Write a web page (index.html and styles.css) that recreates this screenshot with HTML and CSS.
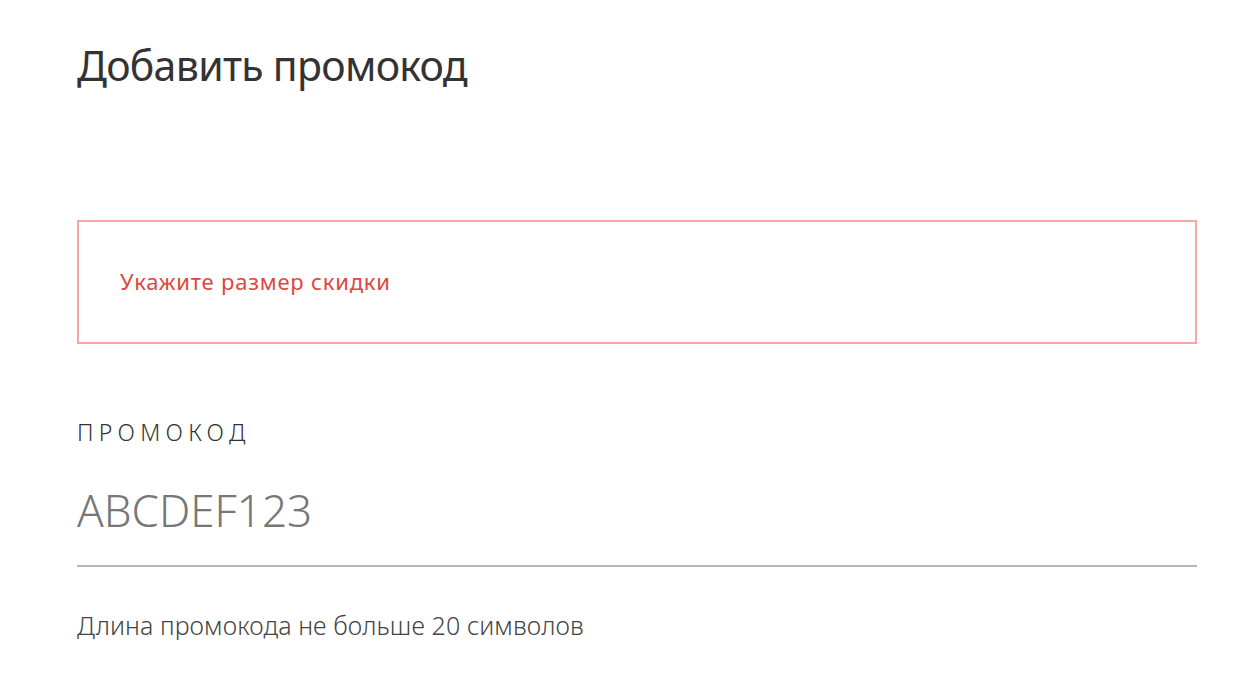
FILE: index.html
```html
<!DOCTYPE html>
<html lang="ru">
<head>
<meta charset="utf-8">
<title>Добавить промокод</title>
<link rel="stylesheet" href="styles.css">
</head>
<body>
<main class="page">
  <h1 class="title">Добавить промокод</h1>
  <div class="error-box">
    <p class="error-text">Укажите размер скидки</p>
  </div>
  <div class="field">
    <div class="field-label">ПРОМОКОД</div>
    <div class="field-input">ABCDEF123</div>
    <p class="field-hint">Длина промокода не больше 20 символов</p>
  </div>
</main>
</body>
</html>
```

FILE: styles.css
```css
html, body {
  margin: 0;
  padding: 0;
  background: #ffffff;
}

body {
  font-family: "Noto Sans", "Open Sans", sans-serif;
  color: #333333;
}

.page {
  width: 1120px;
  padding: 35px 0 0 77px;
}

.title {
  margin: 0;
  font-size: 41px;
  line-height: 60px;
  font-weight: 400;
  letter-spacing: -0.7px;
  color: #333333;
}

.error-box {
  box-sizing: border-box;
  margin-top: 125px;
  height: 124px;
  border: 2px solid #f4a7a7;
  display: flex;
  align-items: center;
  padding: 0 41px 3px 41px;
}

.error-text {
  margin: 0;
  font-size: 22px;
  line-height: 30px;
  letter-spacing: 0.8px;
  color: #e0463f;
}

.field {
  display: flex;
  flex-direction: column;
  margin-top: 73px;
}

.field-label {
  font-size: 23px;
  line-height: 30px;
  font-weight: 300;
  letter-spacing: 5.3px;
  color: #333333;
}

.field-input {
  margin-top: 38px;
  border-bottom: 2px solid #b5b5b5;
  padding-bottom: 30px;
  font-size: 44px;
  line-height: 50px;
  font-weight: 300;
  color: #777777;
}

.field-hint {
  margin: 43px 0 0 0;
  font-size: 25px;
  line-height: 30px;
  font-weight: 300;
  letter-spacing: 0.1px;
  color: #444444;
}
```
